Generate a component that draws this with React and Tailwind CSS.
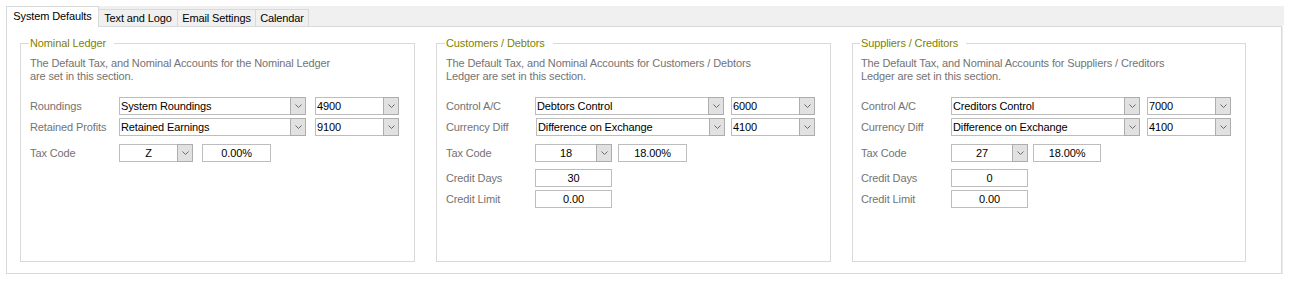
import React from "react";

function Chevron() {
  return (
    <svg width="7" height="4" viewBox="0 0 7 4">
      <polyline points="0.5,0.5 3.5,3.5 6.5,0.5" fill="none" stroke="#6b6b6b" strokeWidth="1" />
    </svg>
  );
}

function Combo({ value, cls, center }) {
  return (
    <div className={"flex h-[18px] border border-[#bdbdbd] bg-white " + cls}>
      <span className={"flex-1 truncate leading-[16px] text-black " + (center ? "text-center" : "pl-[1px]")}>{value}</span>
      <div className="-my-px -mr-px flex w-[16px] items-center justify-center border border-[#adadad] bg-[#e1e1e1]">
        <Chevron />
      </div>
    </div>
  );
}

function Box({ value, cls }) {
  return (
    <div className={"h-[18px] border border-[#bdbdbd] bg-white text-center leading-[16px] text-black " + cls}>{value}</div>
  );
}

function Label({ children }) {
  return <div className="w-[89px] shrink-0 text-[#737373]">{children}</div>;
}

function Group({ title, desc1, desc2, children, cls }) {
  return (
    <fieldset className={"h-[225px] w-[395px] shrink-0 border border-[#d9d9d9] px-[9px] " + cls}>
      <legend className="-ml-px pl-px pr-[8px] leading-[13px] text-[#7f7f00]">{title}</legend>
      <div className="mt-[7px] leading-[13px] text-[#737373]">
        <div>{desc1}</div>
        <div>{desc2}</div>
      </div>
      {children}
    </fieldset>
  );
}

export default function App() {
  return (
    <div className="bg-white pl-[6px] pt-[6px] font-['Liberation_Sans',Arial,sans-serif] text-[11px] tracking-[-0.12px] text-black">
      <div className="w-[1278px]">
        <div className="flex h-[20px] items-start bg-[#f0f0f0]">
          <div className="relative z-10 flex h-[21px] w-[93px] items-center justify-center border border-b-0 border-[#d9d9d9] bg-white pb-[2px]">
            System Defaults
          </div>
          <div className="mt-[3px] flex h-[17px] w-[79px] items-center justify-center border-t border-r border-[#d9d9d9] bg-[#f0f0f0]">
            Text and Logo
          </div>
          <div className="mt-[3px] flex h-[17px] w-[78px] items-center justify-center border-t border-r border-[#d9d9d9] bg-[#f0f0f0]">
            Email Settings
          </div>
          <div className="mt-[3px] flex h-[17px] w-[53px] items-center justify-center border-t border-r border-[#d9d9d9] bg-[#f0f0f0]">
            Calendar
          </div>
        </div>
        <div className="flex h-[248px] w-[1276px] gap-[21px] border border-[#d9d9d9] pl-[13px] pt-[10px] shadow-[1px_1px_0_#ebebeb]">
          <Group
            title="Nominal Ledger"
            desc1="The Default Tax, and Nominal Accounts for the Nominal Ledger"
            desc2="are set in this section."
          >
            <div className="mt-[14px] flex h-[18px] items-center">
              <Label>Roundings</Label>
              <Combo value="System Roundings" cls="w-[187px]" />
              <Combo value="4900" cls="ml-[9px] w-[84px]" />
            </div>
            <div className="mt-[3px] flex h-[18px] items-center">
              <Label>Retained Profits</Label>
              <Combo value="Retained Earnings" cls="w-[187px]" />
              <Combo value="9100" cls="ml-[9px] w-[84px]" />
            </div>
            <div className="mt-[8px] flex h-[18px] items-center">
              <Label>Tax Code</Label>
              <Combo value="Z" center cls="w-[74px]" />
              <Box value="0.00%" cls="ml-[9px] w-[69px]" />
            </div>
          </Group>
          <Group
            title="Customers / Debtors"
            desc1="The Default Tax, and Nominal Accounts for Customers / Debtors"
            desc2="Ledger are set in this section."
          >
            <div className="mt-[14px] flex h-[18px] items-center">
              <Label>Control A/C</Label>
              <Combo value="Debtors Control" cls="w-[189px]" />
              <Combo value="6000" cls="ml-[7px] w-[84px]" />
            </div>
            <div className="mt-[3px] flex h-[18px] items-center">
              <Label>Currency Diff</Label>
              <Combo value="Difference on Exchange" cls="ml-px w-[189px]" />
              <Combo value="4100" cls="ml-[6px] w-[84px]" />
            </div>
            <div className="mt-[8px] flex h-[18px] items-center">
              <Label>Tax Code</Label>
              <Combo value="18" center cls="w-[77px]" />
              <Box value="18.00%" cls="ml-[6px] w-[69px]" />
            </div>
            <div className="mt-[7px] flex h-[18px] items-center">
              <Label>Credit Days</Label>
              <Box value="30" cls="w-[77px]" />
            </div>
            <div className="mt-[3px] flex h-[18px] items-center">
              <Label>Credit Limit</Label>
              <Box value="0.00" cls="w-[77px]" />
            </div>
          </Group>
          <Group
            title="Suppliers / Creditors"
            desc1="The Default Tax, and Nominal Accounts for Suppliers / Creditors"
            desc2="Ledger are set in this section."
            cls="!w-[394px] !pl-[8px]"
          >
            <div className="mt-[14px] flex h-[18px] items-center">
              <div className="w-[90px] shrink-0 text-[#737373]">Control A/C</div>
              <Combo value="Creditors Control" cls="w-[189px]" />
              <Combo value="7000" cls="ml-[7px] w-[84px]" />
            </div>
            <div className="mt-[3px] flex h-[18px] items-center">
              <div className="w-[90px] shrink-0 text-[#737373]">Currency Diff</div>
              <Combo value="Difference on Exchange" cls="w-[189px]" />
              <Combo value="4100" cls="ml-[7px] w-[84px]" />
            </div>
            <div className="mt-[8px] flex h-[18px] items-center">
              <div className="w-[90px] shrink-0 text-[#737373]">Tax Code</div>
              <Combo value="27" center cls="w-[77px]" />
              <Box value="18.00%" cls="ml-[5px] w-[68px]" />
            </div>
            <div className="mt-[7px] flex h-[18px] items-center">
              <div className="w-[90px] shrink-0 text-[#737373]">Credit Days</div>
              <Box value="0" cls="w-[77px]" />
            </div>
            <div className="mt-[3px] flex h-[18px] items-center">
              <div className="w-[90px] shrink-0 text-[#737373]">Credit Limit</div>
              <Box value="0.00" cls="w-[77px]" />
            </div>
          </Group>
        </div>
      </div>
    </div>
  );
}
